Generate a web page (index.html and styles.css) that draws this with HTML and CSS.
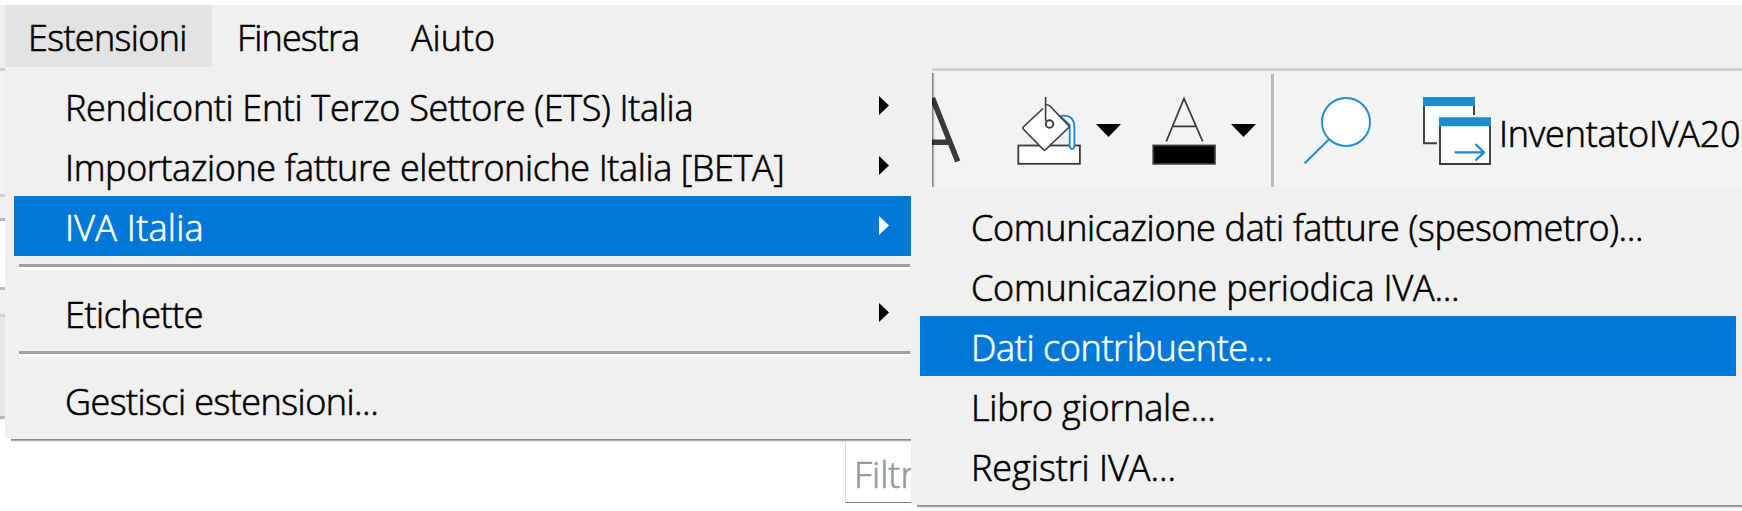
FILE: index.html
```html
<!DOCTYPE html>
<html lang="it">
<head>
<meta charset="utf-8">
<title>Estensioni</title>
<link rel="stylesheet" href="styles.css">
</head>
<body>
<div class="window">
  <nav class="menubar">
    <span class="menubar-item active t-estensioni">Estensioni</span>
    <span class="menubar-item t-finestra">Finestra</span>
    <span class="menubar-item t-aiuto">Aiuto</span>
  </nav>
  <div class="toolbar">
    <svg class="letter" width="30" height="116" viewBox="932 71 30 116"><path d="M932.500 98L957.700 161.500M930 142.200H950" fill="none" stroke="#3a3a38" stroke-width="5.500"/></svg>
    <svg class="bucket" width="66" height="116" viewBox="1016 71 66 116">
      <rect x="1018.3" y="145.5" width="61.6" height="18.3" fill="#fff" stroke="#3a3a38" stroke-width="1.8"/>
      <path d="M1060 116Q1074 113.500 1074.400 127V145.500Q1074 149 1072 149Q1070 149 1069.700 145.500V125Z" fill="#fff" stroke="#1e8bcd" stroke-width="1.900"/>
      <path d="M1043 108.500L1023 127.200Q1022.300 128 1023 128.800L1043.500 149.800Q1044.500 150.800 1045.500 149.800L1068.700 127.500Q1069.500 126.500 1068.700 125.700L1050 106Q1048.500 104.500 1046.500 104.700Z" fill="#fff"/>
      <path d="M1043 108.500L1023 127.200Q1022.300 128 1023 128.800L1043.500 149.800Q1044.500 150.800 1045.500 149.800L1068.700 127.500Q1069.500 126.500 1068.700 125.700L1050 106Q1048.500 104.500 1046.500 104.700M1045.600 97V121" fill="none" stroke="#3a3a38" stroke-width="1.600"/>
      <circle cx="1049.500" cy="124" r="3.800" fill="#fff" stroke="#3a3a38" stroke-width="1.900"/>
    </svg>
    <svg class="drop first" width="25" height="13"><path d="M0 0H25L12.500 13Z"/></svg>
    <svg class="fontcolor" width="64" height="116" viewBox="1152 71 64 116">
      <path d="M1166.300 141.500L1184 98.500L1202.700 141.500M1172 126.300H1196" fill="none" stroke="#3a3a38" stroke-width="1.800"/>
      <rect x="1153.300" y="145.500" width="61.600" height="18.300" fill="#000" stroke="#3a3a38" stroke-width="1.800"/>
    </svg>
    <svg class="drop second" width="25" height="13"><path d="M0 0H25L12.500 13Z"/></svg>
    <div class="divider"></div>
    <svg class="search" width="69" height="116" viewBox="1303 71 69 116"><path d="M1329.300 139L1304.500 163.500" stroke="#1e8bcd" stroke-width="1.900"/><circle cx="1346" cy="122" r="24" fill="#fff" stroke="#1e8bcd" stroke-width="1.900"/></svg>
    <svg class="windows" width="70" height="116" viewBox="1422 71 70 116">
      <path d="M1424 104V143.300H1474V104Z" fill="#fff"/>
      <path d="M1424 104V143.300H1437M1474 104V115" fill="none" stroke="#3a3a38" stroke-width="1.900"/>
      <path d="M1423 97H1475V106H1423Z" fill="#1e8bcd"/>
      <path d="M1437 115H1492V166H1437Z" fill="#f3f3f3"/>
      <path d="M1440 124H1490V164H1440Z" fill="#fff" stroke="#3a3a38" stroke-width="1.900"/>
      <path d="M1439 117.300H1491V126.300H1439Z" fill="#1e8bcd"/>
      <path d="M1454.500 152.400H1484M1475.500 144L1484 152.400L1475.500 160.500" fill="none" stroke="#1e8bcd" stroke-width="2.300"/>
    </svg>
    <span class="sheet-name">InventatoIVA20</span>
  </div>
  <div class="formula-gap"></div>
  <div class="formula"></div>
  <div class="header-gap"></div>
  <div class="headers"></div>
  <div class="filter"><span>Filtro</span></div>
</div>

<div class="menu main-menu">
  <div class="row t-rend">Rendiconti Enti Terzo Settore (ETS) Italia<svg class="chev" width="10" height="19"><path d="M0 0L10 9.500L0 19Z"/></svg></div>
  <div class="row t-imp">Importazione fatture elettroniche Italia [BETA]<svg class="chev" width="10" height="19"><path d="M0 0L10 9.500L0 19Z"/></svg></div>
  <div class="row selected t-iva">IVA Italia<svg class="chev" width="10" height="19"><path d="M0 0L10 9.500L0 19Z"/></svg></div>
  <div class="sep"></div>
  <div class="row t-etich">Etichette<svg class="chev" width="10" height="19"><path d="M0 0L10 9.500L0 19Z"/></svg></div>
  <div class="sep"></div>
  <div class="row t-gest">Gestisci estensioni...</div>
</div>

<div class="menu submenu">
  <div class="row t-com">Comunicazione dati fatture (spesometro)...</div>
  <div class="row t-per">Comunicazione periodica IVA...</div>
  <div class="row selected t-dati">Dati contribuente...</div>
  <div class="row t-libro">Libro giornale...</div>
  <div class="row t-reg">Registri IVA...</div>
</div>
</body>
</html>
```

FILE: styles.css
```css
*, *::before, *::after { box-sizing: border-box; }
body {
  margin: 0;
  position: relative;
  width: 1742px;
  height: 511px;
  overflow: hidden;
  background: #fff;
  color: #000;
  font: 300 36px/60px "Open Sans", "Noto Sans", sans-serif;
  -webkit-text-stroke: 0.65px currentColor;
  white-space: nowrap;
}
svg { display: block; flex: none; }

.window { padding-top: 5px; }
.menubar {
  display: flex;
  height: 63px;
  padding-left: 5px;
  background: #f0f0f0;
}
.menubar-item { height: 62px; padding-top: 3px; }
.menubar-item.active { width: 207px; padding-left: 23px; background: #e3e3e3; }
.t-finestra { width: 172px; padding-left: 25px; }
.t-aiuto { padding-left: 27px; }

.toolbar {
  display: flex;
  align-items: flex-start;
  height: 126px;
  padding-left: 932px;
  border-top: 3px solid #d0d0d0;
  background: #f3f3f3;
}
.bucket { margin-left: 54px; }
.drop { margin-top: 53px; }
.drop.first { margin-left: 14px; }
.fontcolor { margin-left: 31px; }
.drop.second { margin-left: 15px; }
.divider { flex: none; width: 3px; height: 116px; margin: 3px 0 0 15px; background: #bababa; }
.search { margin-left: 29px; }
.windows { margin-left: 50px; }
.sheet-name { margin: 33px 0 0 7px; letter-spacing: -0.25px; }

.formula-gap { height: 24px; border-top: 3px solid #d0d0d0; background: #f0f0f0; }
.formula { height: 69px; border-top: 3px solid #b4b4b4; background: #fff; }
.header-gap { height: 27px; border-top: 3px solid #b9b9b9; background: #f0f0f0; }
.headers {
  height: 105px;
  border-top: 3px solid #d0d0d0;
  border-bottom: 3px solid #b9b9b9;
  background: #e6e6e6;
}
.filter {
  width: 200px;
  height: 84px;
  margin-left: 845px;
  padding: 26px 0 0 8px;
  border-left: 1px solid #ddd;
  border-bottom: 1px solid #777;
  color: #999;
}

.menu { position: absolute; background: #f0f0f0; }
.menu::after {
  content: "";
  position: absolute;
  left: 6px;
  right: 0;
  top: 100%;
  height: 3px;
  background: linear-gradient(#8a8a8a 0 1px, #aaa 1px 2px, #e6e6e6 2px);
}
.main-menu { left: 5px; top: 67px; width: 927px; height: 372px; padding: 9px 21px 0 9px; }
.main-menu::before {
  content: "";
  position: absolute;
  left: 100%;
  top: 6px;
  bottom: 0;
  width: 3px;
  background: linear-gradient(90deg, #0007 0 1px, #0004 1px 2px, #0001 2px);
}
.submenu { left: 911px; top: 187px; width: 840px; height: 318px; padding: 9px 15px 0 9px; }

.row {
  display: flex;
  justify-content: space-between;
  height: 60px;
  padding: 2px 22px 0 51px;
  line-height: 60px;
}
.selected { background: #0078d9; color: #fff; }
.chev { margin-top: 18px; fill: currentColor; }
.sep {
  height: 27px;
  padding-top: 8px;
  margin: 0 1px 0 5px;
}
.sep::before {
  content: "";
  display: block;
  height: 6px;
  border-top: 3px solid #a0a0a0;
  background: #fff;
}

.t-estensioni { letter-spacing: -0.63px; }
.t-finestra { letter-spacing: -0.85px; }
.t-aiuto { letter-spacing: 0; }
.t-rend { letter-spacing: -0.33px; }
.t-imp { letter-spacing: -0.39px; }
.t-iva { letter-spacing: 0.25px; }
.t-etich { letter-spacing: -0.45px; }
.t-gest { letter-spacing: -0.53px; }
.t-com { letter-spacing: -0.34px; }
.t-per { letter-spacing: -0.22px; }
.t-dati { letter-spacing: -0.38px; }
.t-libro { letter-spacing: -0.23px; }
.t-reg { letter-spacing: -0.03px; }
```
